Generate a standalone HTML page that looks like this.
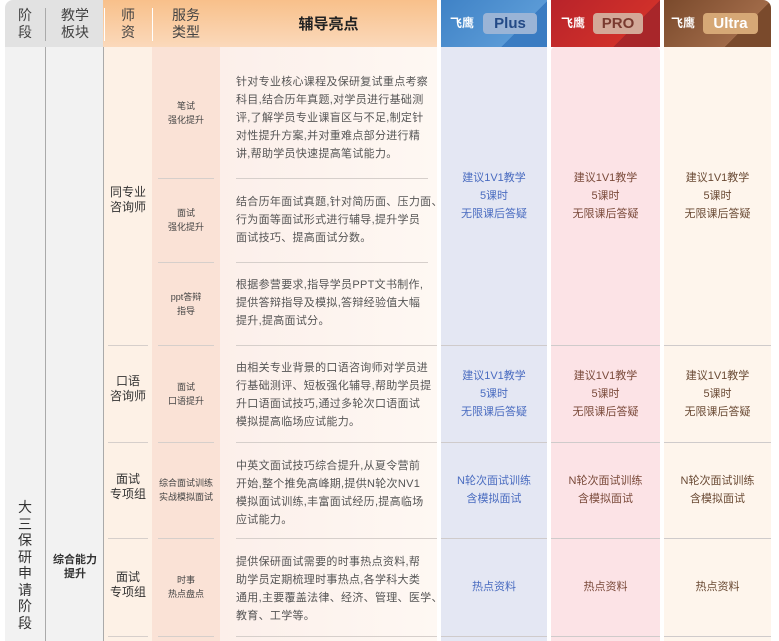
<!DOCTYPE html>
<html><head><meta charset="utf-8"><style>
*{margin:0;padding:0;box-sizing:border-box}
body{width:779px;height:641px;overflow:hidden;background:#fff;font-family:"Liberation Sans","Noto Sans CJK SC",sans-serif;color:#555;position:relative}
.a{position:absolute}
.c{display:flex;align-items:center;justify-content:center;text-align:center;flex-direction:column}
.hl{position:absolute;height:1px;background:#d6cfcb}
.d{font-size:11px;line-height:18px;color:#555;letter-spacing:0.3px;white-space:nowrap}
.st{font-size:9px;line-height:14px;color:#444}
.sz{font-size:12px;line-height:15px;color:#333}
.hd{font-size:14px;line-height:17px;color:#444}
.p{font-size:11px;line-height:18px}
</style></head><body>
<div class="a" style="left:5px;top:0;width:99px;height:47px;background:#e2e2e2;border-radius:8px 0 0 0"></div>
<div class="a" style="left:103px;top:0;width:334px;height:47px;background:linear-gradient(#f8c08a,#fbd9bb)"></div>
<div class="a" style="left:45px;top:8px;width:1px;height:33px;background:#aaa"></div>
<div class="a" style="left:104px;top:8px;width:1px;height:33px;background:#fff"></div>
<div class="a" style="left:152px;top:8px;width:1px;height:33px;background:#fff"></div>
<div class="a c hd" style="left:5px;top:5px;width:40px;height:37px">阶<br>段</div>
<div class="a c hd" style="left:46px;top:5px;width:58px;height:37px">教学<br>板块</div>
<div class="a c hd" style="left:104px;top:5px;width:48px;height:37px">师<br>资</div>
<div class="a c hd" style="left:152px;top:5px;width:68px;height:37px">服务<br>类型</div>
<div class="a c" style="left:220px;top:5px;width:217px;height:37px;font-size:15px;font-weight:bold;color:#222">辅导亮点</div>
<div class="a" style="left:441px;top:0;width:106px;height:47px;background:linear-gradient(135deg,#3f82c6,#5a9ad6 70%,#3a7cc2 70%)"></div>
<div class="a" style="left:551px;top:0;width:109px;height:47px;background:linear-gradient(135deg,#b8232a,#d0302a 70%,#a8262a 70%)"></div>
<div class="a" style="left:664px;top:0;width:107px;height:47px;background:linear-gradient(135deg,#7a4a2c,#a06a48 70%,#7a4a2c 70%);border-radius:0 8px 0 0"></div>
<div class="a" style="left:450px;top:14px;color:#fff;font-size:12px;font-weight:bold">飞鹰</div>
<div class="a c" style="left:483px;top:13px;width:54px;height:21px;background:#9ab4d6;border-radius:4px;color:#234a86;font-weight:bold;font-size:15px">Plus</div>
<div class="a" style="left:561px;top:14px;color:#fff;font-size:12px;font-weight:bold">飞鹰</div>
<div class="a c" style="left:593px;top:13px;width:50px;height:21px;background:#d3a898;border-radius:4px;color:#7a3a30;font-weight:bold;font-size:15px">PRO</div>
<div class="a" style="left:671px;top:14px;color:#fff;font-size:12px;font-weight:bold">飞鹰</div>
<div class="a c" style="left:703px;top:13px;width:55px;height:21px;background:#d6a876;border-radius:4px;color:#fff;font-weight:bold;font-size:15px">Ultra</div>
<div class="a" style="left:5px;top:47px;width:99px;height:594px;background:#f2f2f2"></div>
<div class="a" style="left:45px;top:47px;width:1px;height:594px;background:#aaa"></div>
<div class="a" style="left:103px;top:47px;width:1px;height:594px;background:#aaa"></div>
<div class="a" style="left:104px;top:47px;width:48px;height:594px;background:#fdf1e6"></div>
<div class="a" style="left:152px;top:47px;width:68px;height:594px;background:#fae2d6"></div>
<div class="a" style="left:220px;top:47px;width:217px;height:594px;background:linear-gradient(90deg,#fcefea,#fef8f3)"></div>
<div class="a" style="left:441px;top:47px;width:106px;height:594px;background:#e4e7f3"></div>
<div class="a" style="left:551px;top:47px;width:109px;height:594px;background:#fce3e6;border-radius:4px 4px 0 0"></div>
<div class="a" style="left:664px;top:47px;width:107px;height:594px;background:#fef5ec"></div>
<div class="hl" style="left:158px;top:178px;width:56px"></div><div class="hl" style="left:236px;top:178px;width:192px"></div>
<div class="hl" style="left:158px;top:262px;width:56px"></div><div class="hl" style="left:236px;top:262px;width:192px"></div>
<div class="hl" style="left:108px;top:345px;width:40px"></div><div class="hl" style="left:158px;top:345px;width:56px"></div><div class="hl" style="left:236px;top:345px;width:201px"></div>
<div class="hl" style="left:108px;top:442px;width:40px"></div><div class="hl" style="left:158px;top:442px;width:56px"></div><div class="hl" style="left:236px;top:442px;width:201px"></div>
<div class="hl" style="left:108px;top:538px;width:40px"></div><div class="hl" style="left:158px;top:538px;width:56px"></div><div class="hl" style="left:236px;top:538px;width:201px"></div>
<div class="hl" style="left:108px;top:636px;width:40px"></div><div class="hl" style="left:158px;top:636px;width:56px"></div><div class="hl" style="left:236px;top:636px;width:201px"></div>
<div class="hl" style="left:441px;top:345px;width:330px;background:#cfcbcb"></div>
<div class="hl" style="left:441px;top:442px;width:330px;background:#cfcbcb"></div>
<div class="hl" style="left:441px;top:538px;width:330px;background:#cfcbcb"></div>
<div class="hl" style="left:441px;top:636px;width:330px;background:#cfcbcb"></div>
<div class="a" style="left:547px;top:0;width:4px;height:641px;background:#fff"></div>
<div class="a" style="left:660px;top:0;width:4px;height:641px;background:#fff"></div>
<div class="a c" style="left:5px;top:499px;width:40px;font-size:14px;line-height:16.5px;color:#333">大<br>三<br>保<br>研<br>申<br>请<br>阶<br>段</div>
<div class="a c" style="left:46px;top:553px;width:58px;font-size:11px;line-height:14px;font-weight:bold;color:#333">综合能力<br>提升</div>
<div class="a c sz" style="left:104px;top:185px;width:48px">同专业<br>咨询师</div>
<div class="a c sz" style="left:104px;top:374px;width:48px">口语<br>咨询师</div>
<div class="a c sz" style="left:104px;top:472px;width:48px">面试<br>专项组</div>
<div class="a c sz" style="left:104px;top:570px;width:48px">面试<br>专项组</div>
<div class="a c st" style="left:152px;top:47px;width:68px;height:131px">笔试<br>强化提升</div>
<div class="a c st" style="left:152px;top:178px;width:68px;height:84px">面试<br>强化提升</div>
<div class="a c st" style="left:152px;top:262px;width:68px;height:83px">ppt答辩<br>指导</div>
<div class="a c st" style="left:152px;top:345px;width:68px;height:97px">面试<br>口语提升</div>
<div class="a c st" style="left:152px;top:442px;width:68px;height:96px">综合面试训练<br>实战模拟面试</div>
<div class="a c st" style="left:152px;top:538px;width:68px;height:98px">时事<br>热点盘点</div>
<div class="a d" style="left:236px;top:73px">针对专业核心课程及保研复试重点考察<br>科目,结合历年真题,对学员进行基础测<br>评,了解学员专业课盲区与不足,制定针<br>对性提升方案,并对重难点部分进行精<br>讲,帮助学员快速提高笔试能力。</div>
<div class="a d" style="left:236px;top:193px">结合历年面试真题,针对简历面、压力面、<br>行为面等面试形式进行辅导,提升学员<br>面试技巧、提高面试分数。</div>
<div class="a d" style="left:236px;top:276px">根据参营要求,指导学员PPT文书制作,<br>提供答辩指导及模拟,答辩经验值大幅<br>提升,提高面试分。</div>
<div class="a d" style="left:236px;top:359px">由相关专业背景的口语咨询师对学员进<br>行基础测评、短板强化辅导,帮助学员提<br>升口语面试技巧,通过多轮次口语面试<br>模拟提高临场应试能力。</div>
<div class="a d" style="left:236px;top:457px">中英文面试技巧综合提升,从夏令营前<br>开始,整个推免高峰期,提供N轮次NV1<br>模拟面试训练,丰富面试经历,提高临场<br>应试能力。</div>
<div class="a d" style="left:236px;top:553px">提供保研面试需要的时事热点资料,帮<br>助学员定期梳理时事热点,各学科大类<br>通用,主要覆盖法律、经济、管理、医学、<br>教育、工学等。</div>
<div class="a c p" style="left:441px;top:47px;width:106px;height:298px;color:#4a6cc0">建议1V1教学<br>5课时<br>无限课后答疑</div>
<div class="a c p" style="left:551px;top:47px;width:109px;height:298px;color:#7a4a3a">建议1V1教学<br>5课时<br>无限课后答疑</div>
<div class="a c p" style="left:664px;top:47px;width:107px;height:298px;color:#6a4a34">建议1V1教学<br>5课时<br>无限课后答疑</div>
<div class="a c p" style="left:441px;top:345px;width:106px;height:97px;color:#4a6cc0">建议1V1教学<br>5课时<br>无限课后答疑</div>
<div class="a c p" style="left:551px;top:345px;width:109px;height:97px;color:#7a4a3a">建议1V1教学<br>5课时<br>无限课后答疑</div>
<div class="a c p" style="left:664px;top:345px;width:107px;height:97px;color:#6a4a34">建议1V1教学<br>5课时<br>无限课后答疑</div>
<div class="a c p" style="left:441px;top:442px;width:106px;height:96px;color:#4a6cc0">N轮次面试训练<br>含模拟面试</div>
<div class="a c p" style="left:551px;top:442px;width:109px;height:96px;color:#7a4a3a">N轮次面试训练<br>含模拟面试</div>
<div class="a c p" style="left:664px;top:442px;width:107px;height:96px;color:#6a4a34">N轮次面试训练<br>含模拟面试</div>
<div class="a c p" style="left:441px;top:538px;width:106px;height:98px;color:#4a6cc0">热点资料</div>
<div class="a c p" style="left:551px;top:538px;width:109px;height:98px;color:#7a4a3a">热点资料</div>
<div class="a c p" style="left:664px;top:538px;width:107px;height:98px;color:#6a4a34">热点资料</div>
</body></html>
